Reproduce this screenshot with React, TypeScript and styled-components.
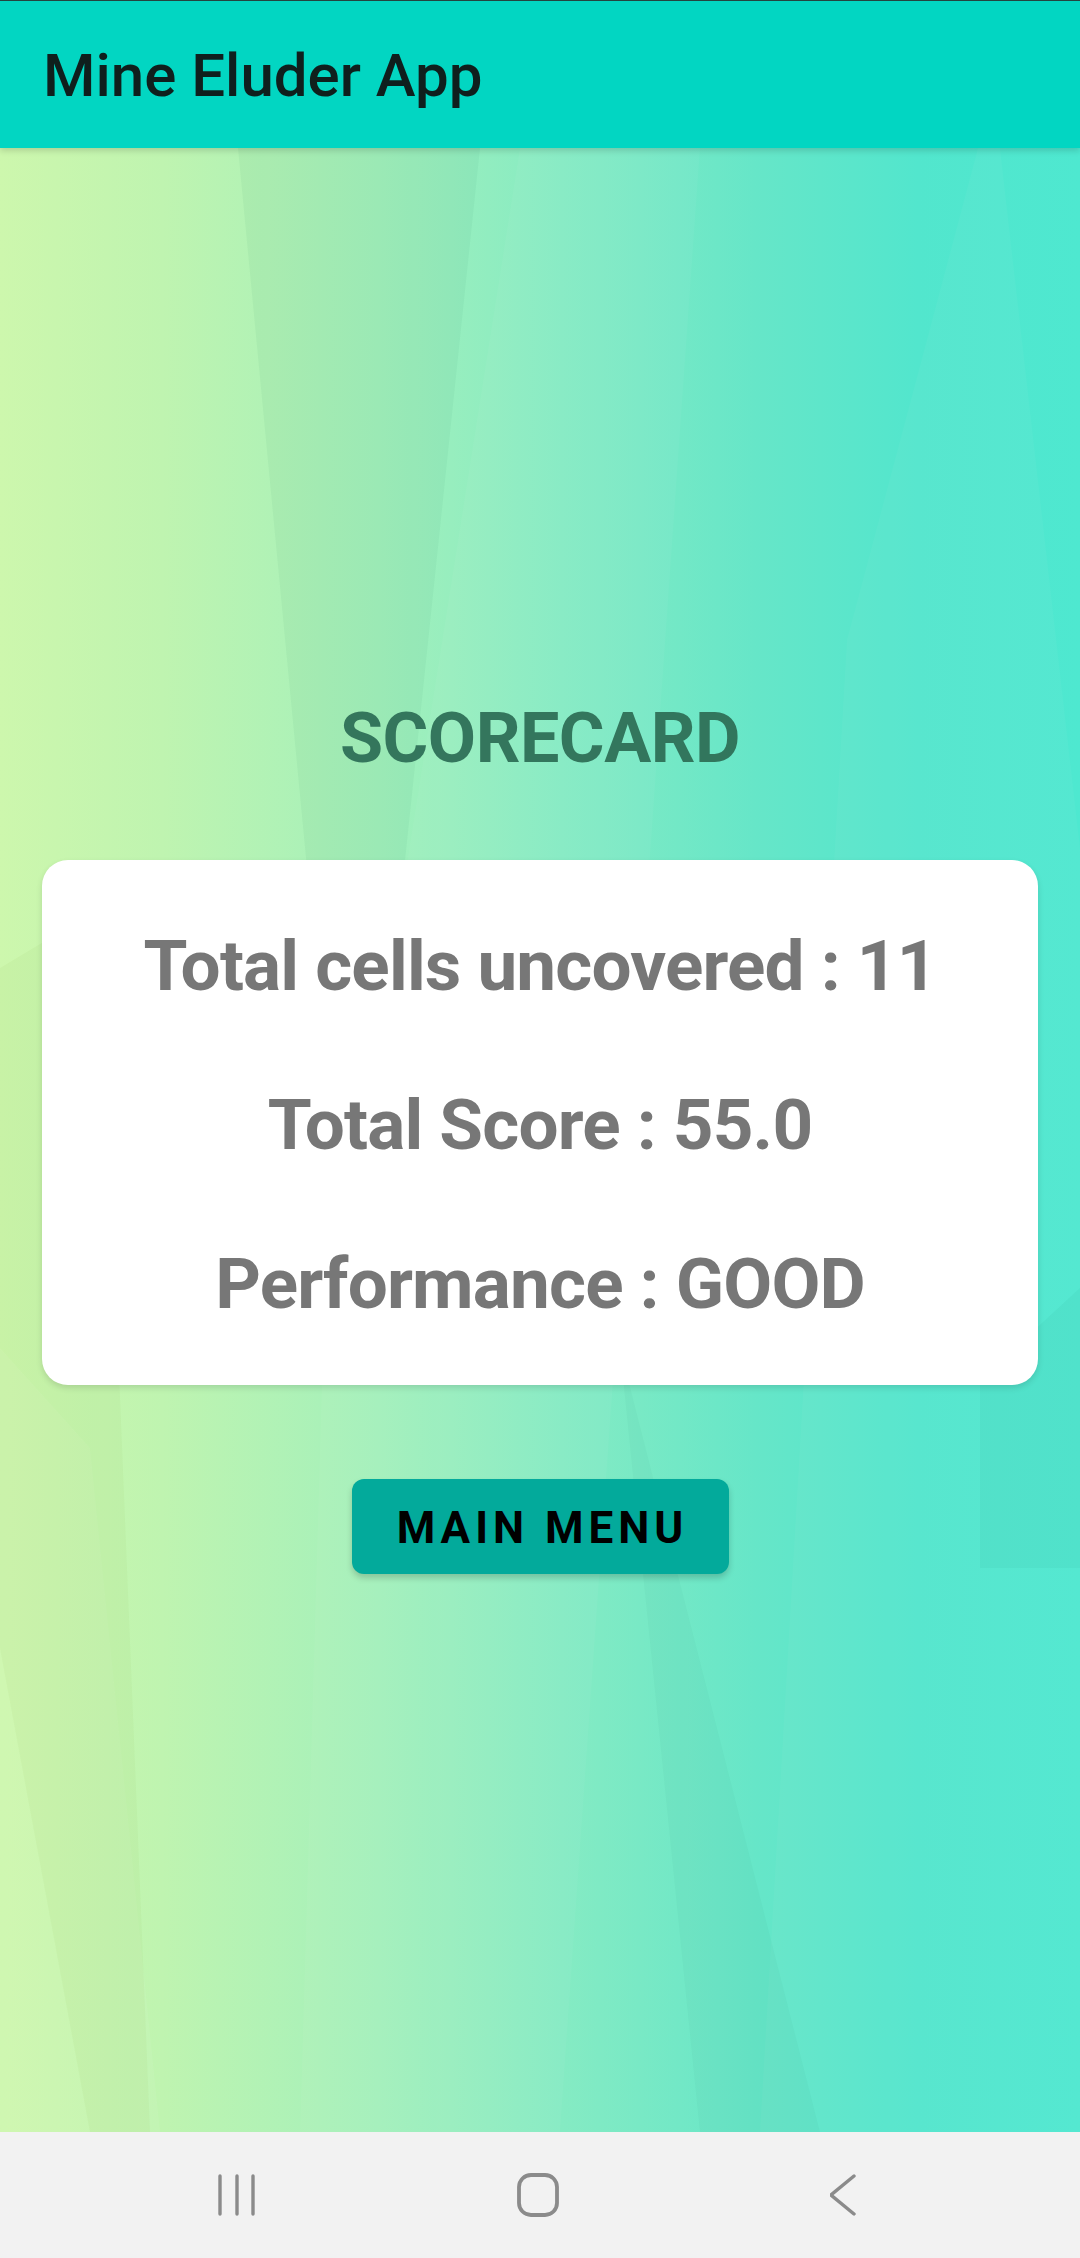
import React from "react";
import styled, { createGlobalStyle } from "styled-components";

const GlobalStyle = createGlobalStyle`
  html, body { margin: 0; padding: 0; }
  body { font-family: Roboto, "Noto Sans", Arial, sans-serif; background: #f2f2f2; }
  * { box-sizing: border-box; }
`;

const Screen = styled.div`
  width: 1080px;
  height: 2258px;
  display: flex;
  flex-direction: column;
  overflow: hidden;
  border-top: 1px solid #24443f;
`;

const AppBar = styled.header`
  height: 147px;
  flex: none;
  background: #02d6c2;
  display: flex;
  align-items: center;
  padding: 2px 43px 0;
  position: relative;
  z-index: 2;
  box-shadow: 0 3px 6px rgba(0, 0, 0, 0.14);
`;

const AppTitle = styled.h1`
  margin: 0;
  font-family: Roboto, sans-serif;
  font-weight: 500;
  font-size: 60px;
  line-height: 70px;
  color: #0f1f1d;
  letter-spacing: 0;
`;

const Main = styled.main`
  flex: 1;
  position: relative;
  display: flex;
  flex-direction: column;
  align-items: center;
  padding: 548px 42px 0;
  background: linear-gradient(
    90deg,
    #cdf7ad 0%,
    #bff4b0 15%,
    #a3f0bb 35%,
    #85ebc3 52%,
    #66e6c8 70%,
    #52e6cd 85%,
    #4ee8d0 100%
  );
`;

const Facets = styled.svg`
  position: absolute;
  inset: 0;
  width: 100%;
  height: 100%;
  pointer-events: none;
`;

const Heading = styled.h2`
  position: relative;
  margin: 0;
  font-family: Roboto, sans-serif;
  font-weight: 700;
  font-size: 70px;
  line-height: 84px;
  letter-spacing: -0.5px;
  color: #2f7058;
  opacity: 0.95;
`;

const Card = styled.section`
  position: relative;
  margin-top: 80px;
  width: 100%;
  background: #ffffff;
  border-radius: 26px;
  box-shadow: 0 3px 6px rgba(0, 0, 0, 0.12);
  padding: 64px 20px 59px;
  display: flex;
  flex-direction: column;
  align-items: center;
  gap: 75px;
`;

const StatLine = styled.p`
  margin: 0;
  font-family: Roboto, sans-serif;
  font-weight: 700;
  font-size: 71px;
  line-height: 84px;
  letter-spacing: -0.8px;
  color: #777777;
  text-align: center;
  white-space: nowrap;
`;

const MenuButton = styled.button`
  position: relative;
  margin-top: 94px;
  width: 377px;
  height: 95px;
  border: none;
  border-radius: 12px;
  background: #03aa9b;
  box-shadow: 0 4px 6px rgba(0, 0, 0, 0.18);
  font-family: Roboto, sans-serif;
  font-weight: 700;
  font-size: 44px;
  letter-spacing: 5px;
  color: #000000;
  padding: 3px 0 0 5px;
  cursor: pointer;
`;

const NavBar = styled.nav`
  height: 126px;
  flex: none;
  background: #f2f2f2;
  display: grid;
  grid-template-columns: 215px 44px 257px 44px 270px 44px 1fr;
  align-items: center;
`;

const NavSlot = styled.div<{ $col: number }>`
  grid-column: ${(p) => p.$col};
  display: flex;
  justify-content: flex-start;
  align-items: center;
  height: 126px;
`;

const facets: { points: string; fill: string; opacity: number }[] = [
  { points: "238,0 480,0 400,760 330,960", fill: "#1b7a55", opacity: 0.05 },
  { points: "330,960 400,760 520,0 700,0 560,1984 300,1984", fill: "#ffffff", opacity: 0.04 },
  { points: "978,0 1000,0 1080,700 1080,1984 760,1984 847,492", fill: "#ffffff", opacity: 0.035 },
  { points: "0,1200 90,1300 160,1984 0,1984", fill: "#ffffff", opacity: 0.06 },
  { points: "0,820 100,760 150,1984 90,1984 0,1500", fill: "#6f9a2a", opacity: 0.05 },
  { points: "980,1232 1080,1140 1080,1420 980,1420", fill: "#1a7a6a", opacity: 0.05 },
  { points: "620,1200 820,1984 700,1984", fill: "#207a55", opacity: 0.035 },
];

export default function App() {
  return (
    <>
      <GlobalStyle />
      <Screen>
        <AppBar>
          <AppTitle>Mine Eluder App</AppTitle>
        </AppBar>
        <Main>
          <Facets viewBox="0 0 1080 1984" preserveAspectRatio="none">
            {facets.map((f, i) => (
              <polygon key={i} points={f.points} fill={f.fill} opacity={f.opacity} />
            ))}
          </Facets>
          <Heading>SCORECARD</Heading>
          <Card>
            <StatLine>Total cells uncovered : 11</StatLine>
            <StatLine>Total Score : 55.0</StatLine>
            <StatLine>Performance : GOOD</StatLine>
          </Card>
          <MenuButton>MAIN MENU</MenuButton>
        </Main>
        <NavBar>
          <NavSlot $col={2}>
            <svg width="44" height="44" viewBox="0 0 44 44" fill="none" stroke="#8b8b8b" strokeWidth="3.4" strokeLinecap="round">
              <line x1="5" y1="3" x2="5" y2="41" />
              <line x1="22" y1="3" x2="22" y2="41" />
              <line x1="38" y1="3" x2="38" y2="41" />
            </svg>
          </NavSlot>
          <NavSlot $col={4}>
            <svg width="44" height="46" viewBox="0 0 44 46" fill="none" stroke="#8b8b8b" strokeWidth="3.8">
              <rect x="3" y="3" width="38" height="40" rx="12" />
            </svg>
          </NavSlot>
          <NavSlot $col={6}>
            <svg width="30" height="44" viewBox="0 0 30 44" fill="none" stroke="#8b8b8b" strokeWidth="3.4" strokeLinecap="round" strokeLinejoin="round">
              <polyline points="24,3 1,22 24,41" />
            </svg>
          </NavSlot>
        </NavBar>
      </Screen>
    </>
  );
}
